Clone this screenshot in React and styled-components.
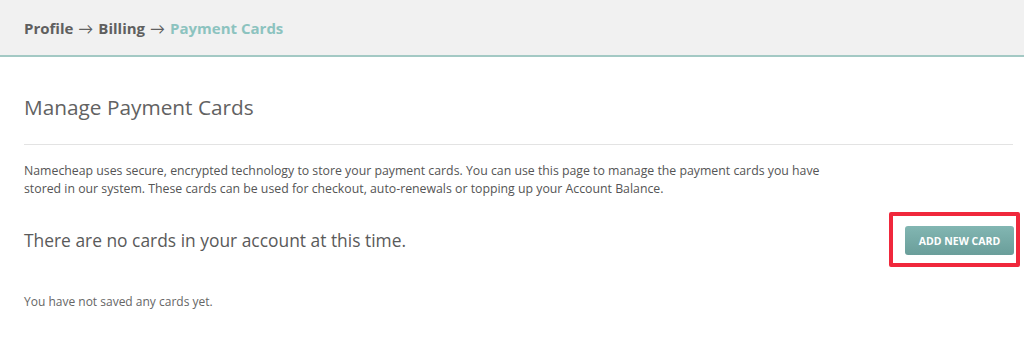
import React from "react";
import styled, { createGlobalStyle } from "styled-components";

const GlobalStyle = createGlobalStyle`
  html, body {
    margin: 0;
    padding: 0;
    background: #ffffff;
    font-family: "Open Sans", Lato, "Liberation Sans", sans-serif;
  }
`;

const Page = styled.div`
  width: 1024px;
  height: 348px;
  overflow: hidden;
  background: #fff;
`;

const Header = styled.div`
  height: 57px;
  box-sizing: border-box;
  background: #f1f1f1;
  border-bottom: 2px solid #a3c9c4;
  display: flex;
  align-items: center;
  padding: 0 24px;
`;

const Crumb = styled.span`
  font-size: 15px;
  font-weight: 700;
  color: ${props => (props.active ? "#8cc3bf" : "#5f5f5f")};
`;

const Arrow = styled.span`
  font-size: 15px;
  color: #5f5f5f;
  margin: 0 5px;
`;

const Content = styled.div`
  padding: 0 11px 0 24px;
`;

const Title = styled.h1`
  margin: 0;
  padding-top: 37px;
  padding-bottom: 24px;
  font-size: 20.8px;
  font-weight: 400;
  color: #626262;
  border-bottom: 1px solid #e3e3e3;
  line-height: 26px;
`;

const Intro = styled.p`
  margin: 17px 0 0;
  width: 820px;
  font-size: 12.3px;
  line-height: 18px;
  color: #555;
`;

const EmptyRow = styled.div`
  display: flex;
  align-items: center;
  justify-content: space-between;
  margin-top: 14px;
`;

const EmptyText = styled.div`
  font-size: 17.4px;
  color: #5a5a5a;
`;

const Highlight = styled.div`
  border: 4px solid #f0283c;
  border-radius: 2px;
  padding: 10px 2px 8px 12px;
  margin-right: -7px;
`;

const AddButton = styled.button`
  width: 109px;
  height: 29px;
  border: none;
  border-radius: 3px;
  background: linear-gradient(#82b6b2, #6a9e9a);
  color: #fff;
  font-family: inherit;
  font-weight: 700;
  font-size: 10.5px;
  text-transform: uppercase;
  cursor: pointer;
`;

const Note = styled.p`
  margin: 26px 0 0;
  font-size: 12px;
  color: #666;
`;

export default function App() {
  return (
    <Page>
      <GlobalStyle />
      <Header>
        <Crumb>Profile</Crumb>
        <Arrow>→</Arrow>
        <Crumb>Billing</Crumb>
        <Arrow>→</Arrow>
        <Crumb active>Payment Cards</Crumb>
      </Header>
      <Content>
        <Title>Manage Payment Cards</Title>
        <Intro>
          Namecheap uses secure, encrypted technology to store your payment cards. You can use this page to
          manage the payment cards you have stored in our system. These cards can be used for checkout,
          auto-renewals or topping up your Account Balance.
        </Intro>
        <EmptyRow>
          <EmptyText>There are no cards in your account at this time.</EmptyText>
          <Highlight>
            <AddButton>Add New Card</AddButton>
          </Highlight>
        </EmptyRow>
        <Note>You have not saved any cards yet.</Note>
      </Content>
    </Page>
  );
}
